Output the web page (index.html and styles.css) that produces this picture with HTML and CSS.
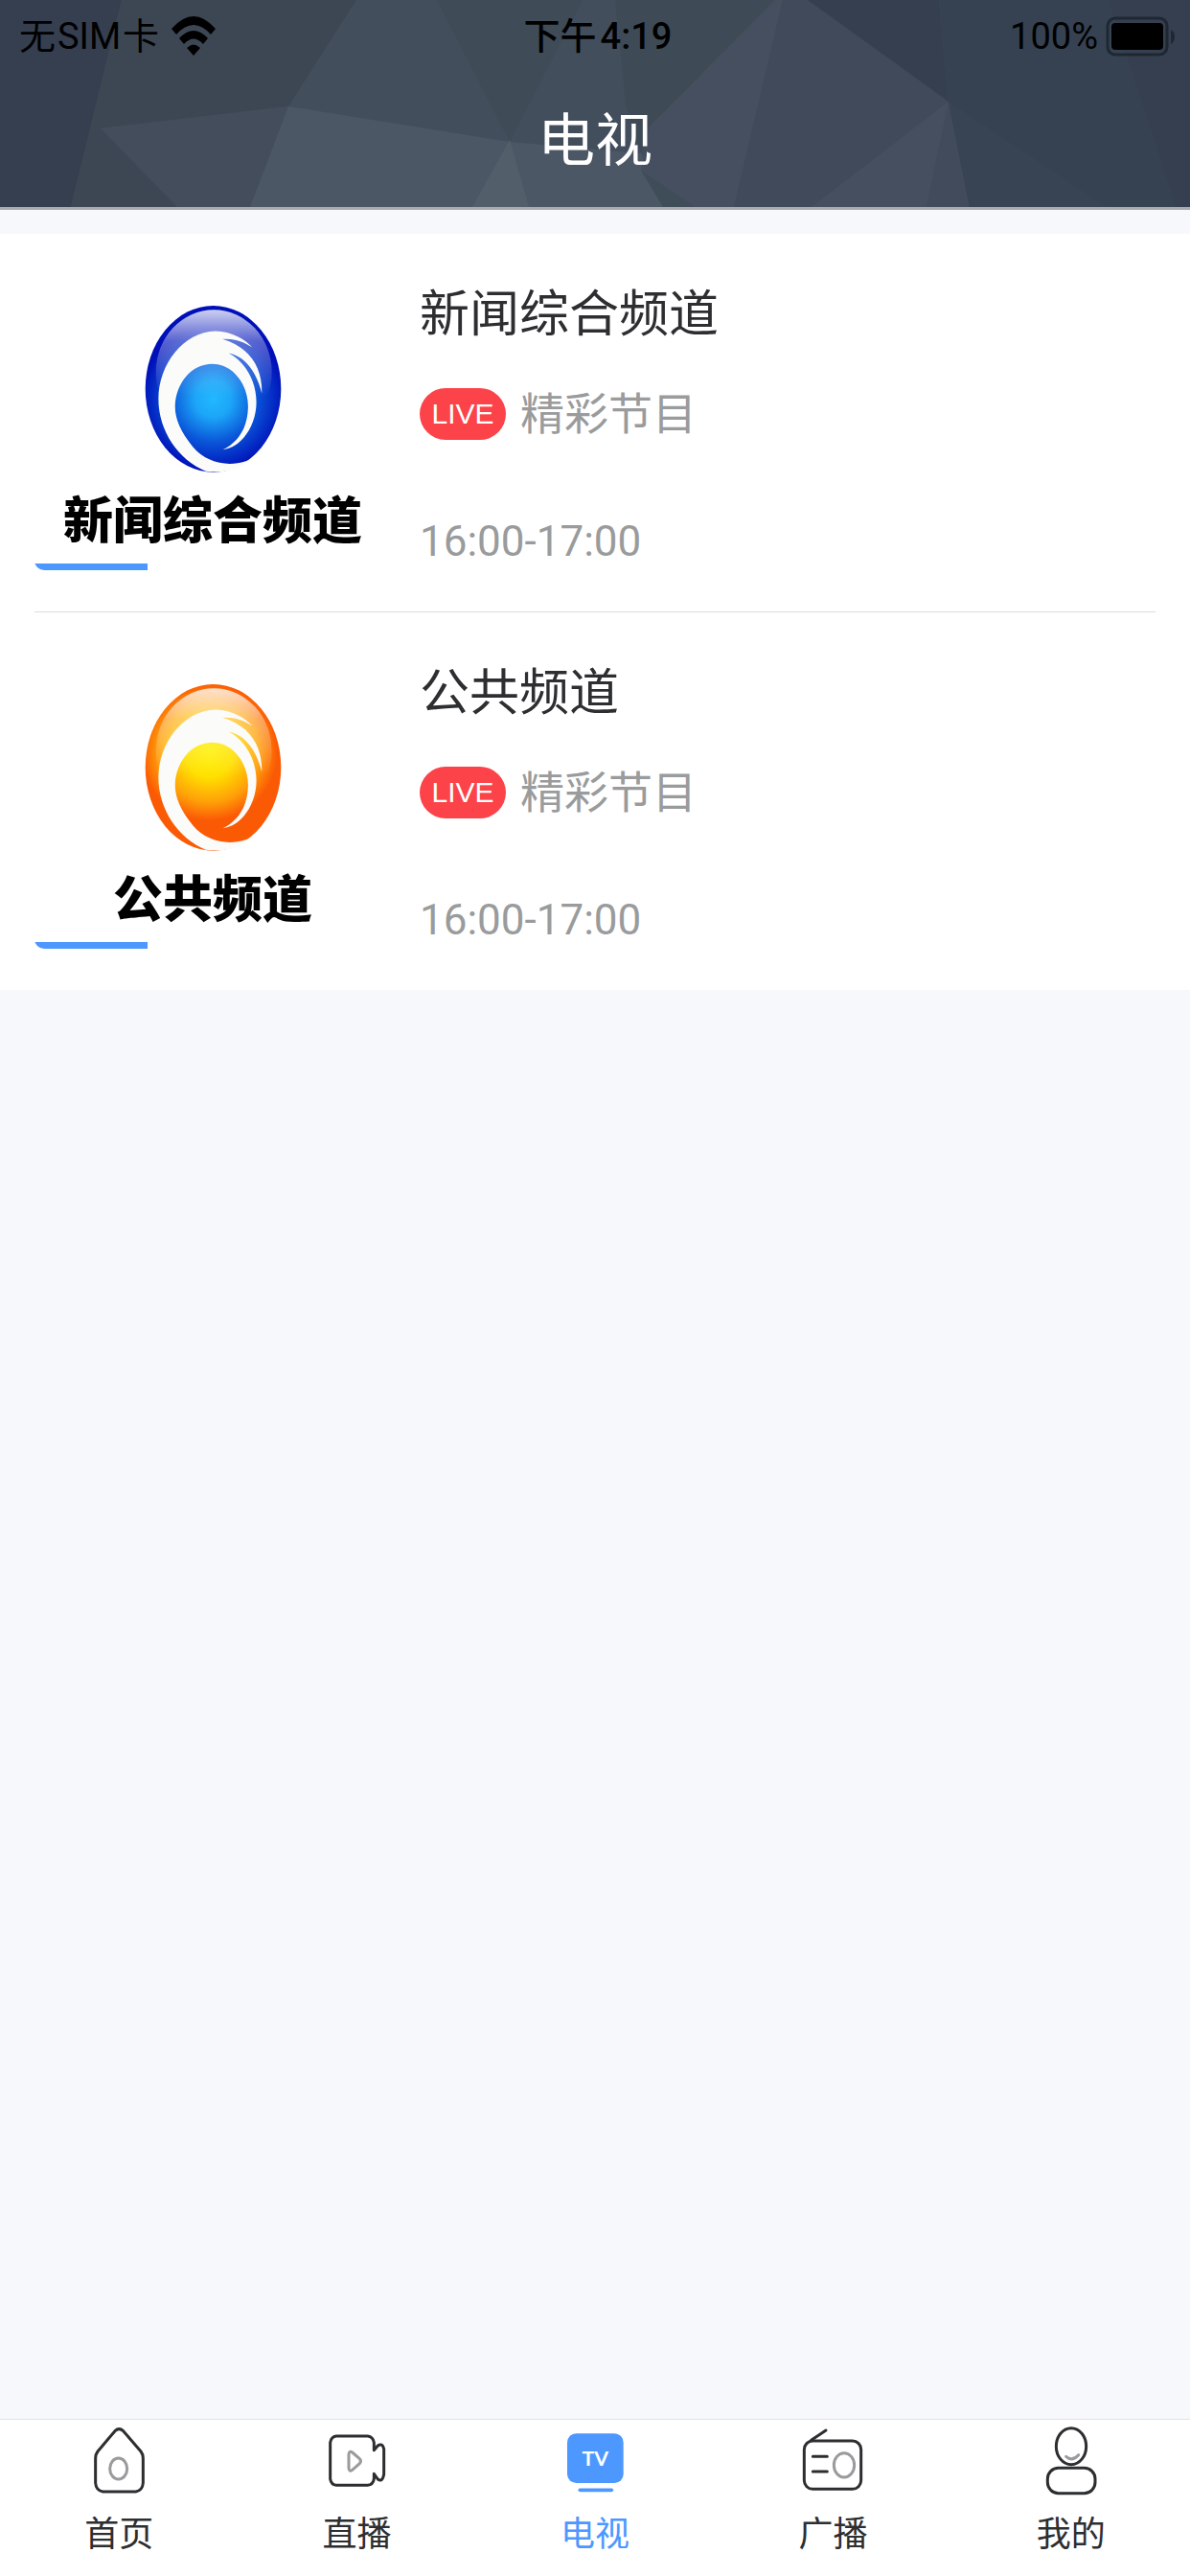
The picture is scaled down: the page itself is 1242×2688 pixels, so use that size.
FILE: index.html
```html
<!DOCTYPE html>
<html lang="zh-CN">
<head>
  <meta charset="utf-8">
  <meta name="viewport" content="width=device-width, initial-scale=1">
  <title>电视</title>
  <link rel="stylesheet" href="styles.css">
</head>
<body>
  <header class="header">
    <!-- low poly background -->
    <svg class="header-bg" viewBox="0 0 1242 216" preserveAspectRatio="none" aria-hidden="true">
      <rect width="1242" height="216" fill="#434e5d"/>
      <polygon points="0,0 127,0 74,216 0,216" fill="#353f50"/>
      <polygon points="127,0 372,0 301,111 105,134 185,216 74,216" fill="#3d4754"/>
      <polygon points="105,134 301,111 261,216 185,216" fill="#434d5c"/>
      <polygon points="301,111 532,148 669,160 692,216 261,216" fill="#4c5766"/>
      <polygon points="456,0 608,0 532,148" fill="#3f4b57"/>
      <polygon points="532,146 552,216 493,216" fill="#525f6b"/>
      <polygon points="642,0 809,0 678,132 669,160 653,110" fill="#3e4b56"/>
      <polygon points="809,0 817,0 766,216 725,216 669,178 678,132" fill="#464f5f"/>
      <polygon points="669,178 725,216 692,216" fill="#3f4d58"/>
      <polygon points="817,0 843,0 990,106 847,216 766,216" fill="#404a5a"/>
      <polygon points="843,0 980,0 990,106" fill="#353f4f"/>
      <polygon points="990,106 967,216 847,216" fill="#464f5f"/>
      <polygon points="990,106 1012,216 967,216" fill="#414b5b"/>
      <polygon points="980,0 1156,0 1227,216 1012,216 990,106" fill="#364252"/>
      <polygon points="990,106 1155,216 1012,216" fill="#384453"/>
      <polygon points="1156,0 1242,0 1242,216 1227,216" fill="#353f4f"/>
    </svg>
    <div class="status-bar">
      <div class="status-left">
        <span class="carrier"><span>无</span><span>SIM</span><span>卡</span></span>
        <svg class="wifi" viewBox="0 0 46 42" aria-hidden="true">
          <path d="M0 13 Q23 -13 46 13 L41 19 Q23 -1 5 19 Z"/>
          <path d="M8 23 Q23 7 38 23 L33 29 Q23 18 13 29 Z"/>
          <path d="M16 33 Q23 26 30 33 L23 41 Z"/>
        </svg>
      </div>
      <div class="status-time"><span>下午</span><span>4:19</span></div>
      <div class="status-right">
        <span>100%</span>
        <svg class="battery" viewBox="0 0 74 42" aria-hidden="true">
          <rect x="2" y="2" width="62" height="38" rx="8" fill="none" stroke="#1f2832" stroke-width="3"/>
          <rect x="6" y="7" width="54" height="28" rx="4"/>
          <path d="M68 14 Q72 16 72 21 Q72 27 68 29 Z" fill="#1f2832"/>
        </svg>
      </div>
    </div>
    <h1>电视</h1>
  </header>

  <main>
    <ul class="channel-list">
      <li class="channel">
        <div class="thumb">
          <svg class="logo" viewBox="448 259 440 536" aria-hidden="true">
            <defs>
              <radialGradient id="blueBall" gradientUnits="userSpaceOnUse" cx="668" cy="560" r="225">
                <stop offset="0" stop-color="#22b8ff"/>
                <stop offset="0.25" stop-color="#1ca6f8"/>
                <stop offset="0.6" stop-color="#0a55d8"/>
                <stop offset="1" stop-color="#0010b8"/>
              </radialGradient>
              <linearGradient id="gloss" x1="0" y1="0" x2="0" y2="1">
                <stop offset="0" stop-color="#fff" stop-opacity="0.8"/>
                <stop offset="0.25" stop-color="#fff" stop-opacity="0.35"/>
                <stop offset="0.6" stop-color="#fff" stop-opacity="0.08"/>
                <stop offset="0.7" stop-color="#fff" stop-opacity="0"/>
              </linearGradient>
            </defs>
            <ellipse cx="668" cy="528" rx="212" ry="260" fill="url(#blueBall)"/>
            <ellipse cx="670" cy="475" rx="181" ry="194" fill="url(#gloss)"/>
            <path class="swoosh" d="M800 742 C735 775 655 768 605 710 C565 660 548 620 549 580 C552 510 600 450 665 450 C730 450 778 515 777 585 C776 650 745 695 698 718 C760 710 803 640 803 570 C803 500 765 440 716 416 C770 425 805 480 820 542 C822 470 790 400 697 372 C740 370 770 385 790 398 C760 365 715 347 675 347 C575 350 497 450 497 560 C497 660 560 750 645 785 C700 792 760 780 800 742 Z"/>
          </svg>
          <span class="logo-name">新闻综合频道</span>
          <div class="progress"></div>
        </div>
        <div class="info">
          <h2>新闻综合频道</h2>
          <p class="program"><span class="live">LIVE</span>精彩节目</p>
          <p class="time">16:00-17:00</p>
        </div>
      </li>
      <li class="channel">
        <div class="thumb">
          <svg class="logo" viewBox="448 259 440 536" aria-hidden="true">
            <defs>
              <radialGradient id="orangeBall" gradientUnits="userSpaceOnUse" cx="655" cy="480" r="260">
                <stop offset="0" stop-color="#fff000"/>
                <stop offset="0.3" stop-color="#ffe000"/>
                <stop offset="0.6" stop-color="#ffa008"/>
                <stop offset="0.82" stop-color="#fb5a05"/>
                <stop offset="1" stop-color="#fb5a05"/>
              </radialGradient>
            </defs>
            <ellipse cx="668" cy="528" rx="212" ry="260" fill="url(#orangeBall)"/>
            <ellipse cx="670" cy="475" rx="181" ry="194" fill="url(#gloss)"/>
            <path class="swoosh" d="M800 742 C735 775 655 768 605 710 C565 660 548 620 549 580 C552 510 600 450 665 450 C730 450 778 515 777 585 C776 650 745 695 698 718 C760 710 803 640 803 570 C803 500 765 440 716 416 C770 425 805 480 820 542 C822 470 790 400 697 372 C740 370 770 385 790 398 C760 365 715 347 675 347 C575 350 497 450 497 560 C497 660 560 750 645 785 C700 792 760 780 800 742 Z"/>
          </svg>
          <span class="logo-name">公共频道</span>
          <div class="progress"></div>
        </div>
        <div class="info">
          <h2>公共频道</h2>
          <p class="program"><span class="live">LIVE</span>精彩节目</p>
          <p class="time">16:00-17:00</p>
        </div>
      </li>
    </ul>
  </main>

  <nav class="tab-bar">
    <a href="#home">
      <svg class="icon" viewBox="264 90 216 240" aria-hidden="true">
        <path d="M360 110 Q373 98 386 110 L441 174 Q448 183 448 195 V273 Q446 297 425 300 H322 Q301 297 299 273 V195 Q299 183 306 174 Z"/>
        <ellipse class="soft" cx="371" cy="228" rx="27" ry="33"/>
      </svg>
      <span>首页</span>
    </a>
    <a href="#live">
      <svg class="icon" viewBox="1010 90 216 240" aria-hidden="true">
        <path d="M1052 126 H1150 Q1167 128 1170 146 V170 L1182 156 Q1196 146 1201 166 V246 Q1196 272 1182 261 L1170 244 V260 Q1167 278 1150 280 H1052 Q1036 278 1033 260 V146 Q1036 128 1052 126 Z"/>
        <path class="soft" d="M1091 182 Q1093 171 1102 177 L1125 197 Q1132 204 1125 212 L1102 232 Q1093 239 1091 227 Z"/>
      </svg>
      <span>直播</span>
    </a>
    <a href="#tv" class="active">
      <svg class="icon" viewBox="495 90 216 240" aria-hidden="true">
        <rect class="solid" x="516" y="118" width="176" height="155" rx="28"/>
        <text x="604" y="220" text-anchor="middle">TV</text>
        <path class="stand" d="M556 295 H655"/>
      </svg>
      <span>电视</span>
    </a>
    <a href="#radio">
      <svg class="icon" viewBox="34 90 216 240" aria-hidden="true">
        <rect x="53" y="141" width="178" height="151" rx="27"/>
        <path d="M75 139 L121 108 M80 190 H125 M80 237 H125"/>
        <ellipse class="soft" cx="178" cy="217" rx="32" ry="38"/>
      </svg>
      <span>广播</span>
    </a>
    <a href="#me">
      <svg class="icon" viewBox="779 90 216 240" aria-hidden="true">
        <ellipse cx="887" cy="158" rx="47" ry="57"/>
        <rect x="813" y="226" width="149" height="79" rx="34"/>
        <path class="soft" d="M871 190 Q890 207 910 185"/>
      </svg>
      <span>我的</span>
    </a>
  </nav>
</body>
</html>
```

FILE: styles.css
```css
* {
  box-sizing: border-box;
}

body {
  margin: 0;
  min-height: 100vh;
  display: flex;
  flex-direction: column;
  background-color: #f7f8fb;
  color: #2c2e30;
  font-family: Roboto, "Noto Sans CJK SC", sans-serif;
}

h1, h2, p, ul {
  margin: 0;
  padding: 0;
  font-weight: normal;
}

/* header */
.header {
  position: relative;
  padding-bottom: 24px;
  border-bottom: 3px solid #a9abaf;
}

.header-bg {
  position: absolute;
  top: 0;
  left: 0;
  width: 100%;
  height: 100%;
}

.status-bar {
  position: relative;
  display: grid;
  grid-template-columns: 1fr auto 1fr;
  align-items: center;
  height: 76px;
  padding: 0 14px 0 20px;
  color: #000;
  font-size: 38px;
  line-height: 44px;
}

.status-left,
.status-right,
.status-time,
.carrier {
  display: flex;
  align-items: center;
}

.status-left {
  gap: 13px;
}

.carrier {
  gap: 2px;
}

.status-time {
  gap: 4px;
  font-weight: 500;
}

.status-right {
  justify-content: flex-end;
  gap: 8px;
}

.wifi {
  width: 46px;
  height: 42px;
}

.battery {
  width: 74px;
  height: 42px;
}

.header h1 {
  position: relative;
  padding-top: 28px;
  color: #fff;
  font-size: 60px;
  line-height: 88px;
  text-align: center;
}

/* channels */
.channel-list {
  margin-top: 25px;
  padding: 0 36px;
  background-color: #fff;
  list-style: none;
}

.channel {
  display: flex;
  gap: 30px;
  padding: 43px 0;
}

.channel + .channel {
  border-top: 1px solid #dcdddf;
}

.thumb {
  position: relative;
  display: flex;
  flex-direction: column;
  align-items: center;
  width: 372px;
  height: 308px;
  padding-top: 29px;
  border-radius: 10px;
  overflow: hidden;
}

.logo {
  width: 147px;
  height: 179px;
}

.swoosh {
  fill: #fbfbfa;
}

.logo-name {
  margin-top: 20px;
  color: #000;
  font-size: 52px;
  font-weight: 900;
  line-height: 60px;
  white-space: nowrap;
}

.progress {
  position: absolute;
  left: 0;
  bottom: 0;
  width: 118px;
  height: 7px;
  background-color: #4c98ff;
}

.info {
  flex: 1;
}

.info h2 {
  font-size: 52px;
  line-height: 84px;
}

.program {
  display: flex;
  align-items: center;
  gap: 15px;
  margin-top: 34px;
  color: #999b9c;
  font-size: 46px;
  line-height: 54px;
}

.live {
  width: 90px;
  height: 54px;
  border-radius: 27px;
  background-color: #fc4349;
  color: #fff;
  font-family: "Liberation Sans", sans-serif;
  font-size: 30px;
  text-align: center;
}

.time {
  margin-top: 79px;
  color: #999b9c;
  font-size: 44px;
  line-height: 54px;
}

/* bottom tabs */
.tab-bar {
  display: flex;
  margin-top: auto;
  padding: 5px 0 16px;
  border-top: 1px solid #dfe1e4;
  background-color: #fff;
}

.tab-bar a {
  flex: 1;
  display: flex;
  flex-direction: column;
  align-items: center;
  gap: 8px;
  color: #2c2e30;
  font-size: 36px;
  line-height: 54px;
  text-decoration: none;
}

.tab-bar a.active {
  color: #4c98ff;
}

.icon {
  width: 72px;
  height: 80px;
  fill: none;
  stroke: #2c2e30;
  stroke-width: 9px;
  stroke-linecap: round;
  stroke-linejoin: round;
}

.icon .soft {
  stroke: #999b9c;
}

.icon .solid {
  fill: #4c98ff;
  stroke: none;
}

.icon .stand {
  stroke: #4c98ff;
  stroke-width: 11px;
}

.icon text {
  fill: #fff;
  stroke: none;
  font-family: Lato, sans-serif;
  font-size: 64px;
  font-weight: 700;
}
```
